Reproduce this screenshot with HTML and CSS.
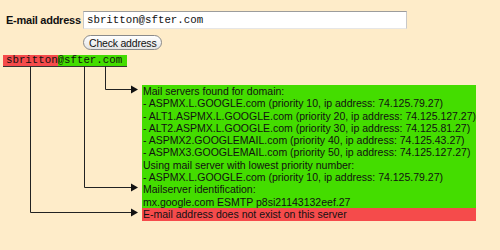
FILE: index.html
```html
<!DOCTYPE html>
<html>
<head>
<meta charset="utf-8">
<link rel="stylesheet" href="styles.css">
</head>
<body>
<div class="page">
  <form class="form">
    <label class="label" for="email">E-mail address</label>
    <input class="input" id="email" type="text" value="sbritton@sfter.com">
    <span></span>
    <button class="button" type="button">Check address</button>
  </form>
  <div class="domain"><span class="local">sbritton</span><span class="host">@sfter.com</span></div>
  <div class="results">
    <div class="ok">
      <div>Mail servers found for domain:</div>
      <div>- ASPMX.L.GOOGLE.com (priority 10, ip address: 74.125.79.27)</div>
      <div>- ALT1.ASPMX.L.GOOGLE.com (priority 20, ip address: 74.125.127.27)</div>
      <div>- ALT2.ASPMX.L.GOOGLE.com (priority 30, ip address: 74.125.81.27)</div>
      <div>- ASPMX2.GOOGLEMAIL.com (priority 40, ip address: 74.125.43.27)</div>
      <div>- ASPMX3.GOOGLEMAIL.com (priority 50, ip address: 74.125.127.27)</div>
      <div>Using mail server with lowest priority number:</div>
      <div>- ASPMX.L.GOOGLE.com (priority 10, ip address: 74.125.79.27)</div>
      <div>Mailserver identification:</div>
      <div>mx.google.com ESMTP p8si21143132eef.27</div>
    </div>
    <div class="fail">E-mail address does not exist on this server</div>
  </div>
  <svg class="connectors" width="500" height="250" viewBox="0 0 500 250">
    <g fill="none" stroke="#222" stroke-width="1">
      <path d="M30.5 66 V212.5 H132"/>
      <path d="M84.5 66 V187.5 H132"/>
      <path d="M105.5 66 V89.5 H132"/>
    </g>
    <g fill="#111">
      <path d="M131 85.5 L138 89.5 L131 93.5 Z"/>
      <path d="M131 183.5 L138 187.5 L131 191.5 Z"/>
      <path d="M131 208.5 L138 212.5 L131 216.5 Z"/>
    </g>
  </svg>
</div>
</body>
</html>
```
FILE: styles.css
```css
html, body {
  margin: 0;
  padding: 0;
  background: #feecc9;
}
.page {
  position: relative;
  width: 500px;
  height: 250px;
  font-family: "Liberation Sans", Arial, sans-serif;
  color: #111;
}
.form {
  display: grid;
  grid-template-columns: 77px 324px;
  row-gap: 6px;
  padding: 11px 0 0 6px;
  margin: 0;
  align-items: center;
}
.label {
  font-weight: bold;
  font-size: 11px;
  white-space: nowrap;
  letter-spacing: -0.25px;
}
.input {
  box-sizing: border-box;
  width: 324px;
  height: 18px;
  margin: 0;
  padding: 0 3px;
  border: 1px solid #c8c8c8;
  border-top-color: #9c9c9c;
  border-bottom-color: #e6e6e6;
  background: #fff;
  font-family: "Liberation Mono", monospace;
  font-size: 10.75px;
  color: #111;
  outline: none;
}
.button {
  justify-self: start;
  box-sizing: border-box;
  height: 15px;
  margin: 0;
  padding: 0 5px;
  border: 1px solid #8a8a8a;
  border-radius: 8px;
  background: linear-gradient(#ffffff, #e4e4e4);
  font-family: "Liberation Sans", Arial, sans-serif;
  font-size: 10.5px;
  letter-spacing: -0.2px;
  line-height: 12px;
  color: #111;
  white-space: nowrap;
}
.domain {
  display: flex;
  width: max-content;
  margin: 5px 0 0 3px;
  border-bottom: 1px solid #333;
  font-family: "Liberation Mono", monospace;
  font-size: 10.75px;
  line-height: 11px;
}
.local {
  background: #f54b4b;
  padding: 0 0 0 3px;
}
.host {
  background: #44dd00;
  padding: 0 5px 0 0;
}
.results {
  margin: 18px 0 0 142px;
  width: 334px;
  font-size: 10.5px;
  line-height: 12.3px;
  white-space: nowrap;
}
.ok {
  background: #44dd00;
  padding: 0 0 0 1px;
}
.fail {
  background: #f54b4b;
  padding: 0 0 1px 1px;
}
.connectors {
  position: absolute;
  left: 0;
  top: 0;
  pointer-events: none;
}
```
